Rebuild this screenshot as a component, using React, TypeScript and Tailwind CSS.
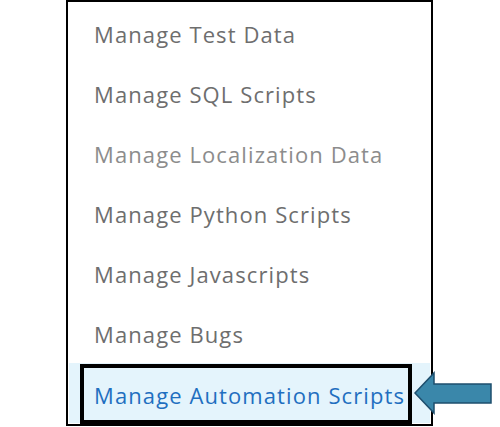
const items = [
  { label: "Manage Test Data", tone: "text-[#6e6e6e]" },
  { label: "Manage SQL Scripts", tone: "text-[#6e6e6e]" },
  { label: "Manage Localization Data", tone: "text-[#8c8c8c]" },
  { label: "Manage Python Scripts", tone: "text-[#6e6e6e]" },
  { label: "Manage Javascripts", tone: "text-[#6e6e6e]" },
  { label: "Manage Bugs", tone: "text-[#6e6e6e]" },
];

export default function App() {
  return (
    <div className="relative h-[427px] w-[500px] overflow-hidden bg-white font-['Open_Sans',sans-serif]">
      <div className="ml-[66px] flex h-[426px] w-[367px] flex-col border-2 border-black pt-[2px]">
        {items.map((it) => (
          <div key={it.label} className={`flex h-[60px] items-center pl-[26px] text-[22px] tracking-[1.1px] ${it.tone}`}>
            {it.label}
          </div>
        ))}
        <div className="mx-[1px] mt-[-1px] flex h-[60px] bg-[#e4f4fc] pt-[1px]">
          <div className="ml-[11px] flex h-[60px] w-[332px] items-center border-4 border-black pl-[10px] pt-[3px] text-[22px] tracking-[1.1px] text-[#1f6fc0]">
            Manage Automation Scripts
          </div>
        </div>
      </div>
      <svg className="absolute left-[412px] top-[370px]" width="82" height="46" viewBox="0 0 82 46">
        <path d="M3 23 L22 3 L22 14 L79 14 L79 33 L22 33 L22 43 Z" fill="#3a87aa" stroke="#1e4f6e" strokeWidth="1.5" strokeLinejoin="miter" />
      </svg>
    </div>
  );
}
